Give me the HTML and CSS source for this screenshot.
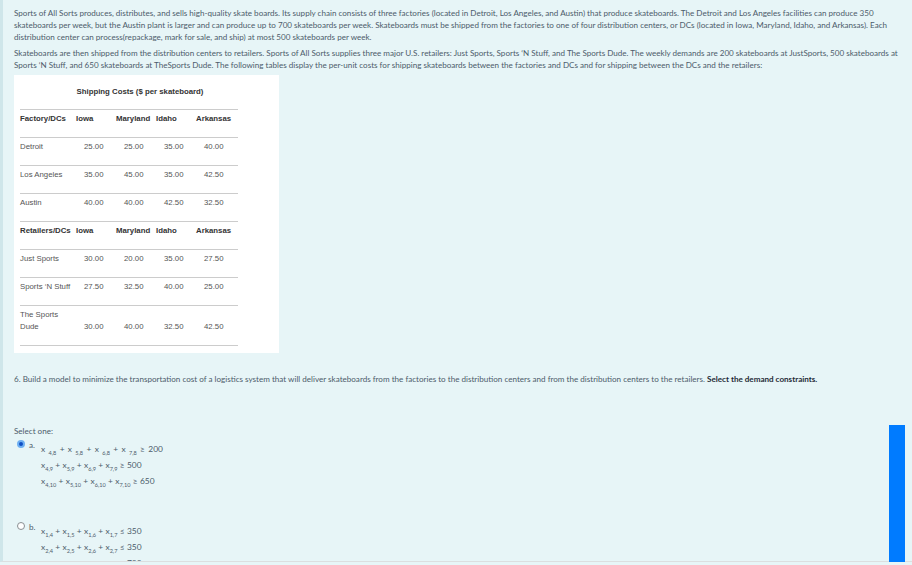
FILE: index.html
```html
<!DOCTYPE html>
<html lang="en">
<head>
    <meta charset="UTF-8">
    <meta name="viewport" content="width=device-width, initial-scale=1.0">
    <title>Question 6</title>
    <link rel="stylesheet" href="styles.css">
</head>
<body>

<div class="question">
    <p class="para">Sports of All Sorts produces, distributes, and sells high-quality skate boards. Its supply chain consists of three factories (located in Detroit, Los Angeles, and Austin) that produce skateboards. The Detroit and Los Angeles facilities can produce 350 skateboards per week, but the Austin plant is larger and can produce up to 700 skateboards per week. Skateboards must be shipped from the factories to one of four distribution centers, or DCs (located in Iowa, Maryland, Idaho, and Arkansas). Each distribution center can process(repackage, mark for sale, and ship) at most 500 skateboards per week.</p>
    <p class="para">Skateboards are then shipped from the distribution centers to retailers. Sports of All Sorts supplies three major U.S. retailers: Just Sports, Sports ‘N Stuff, and The Sports Dude. The weekly demands are 200 skateboards at JustSports, 500 skateboards at Sports ‘N Stuff, and 650 skateboards at TheSports Dude. The following tables display the per-unit costs for shipping skateboards between the factories and DCs and for shipping between the DCs and the retailers:</p>

    <!-- Shipping cost tables -->
    <div class="cost-box">
        <h4 class="cost-title">Shipping Costs ($ per skateboard)</h4>
        <table class="cost-table">
            <tr class="head"><td>Factory/DCs</td><td>Iowa</td><td>Maryland</td><td>Idaho</td><td>Arkansas</td></tr>
            <tr><td>Detroit</td><td class="num">25.00</td><td class="num">25.00</td><td class="num">35.00</td><td class="num">40.00</td></tr>
            <tr><td>Los Angeles</td><td class="num">35.00</td><td class="num">45.00</td><td class="num">35.00</td><td class="num">42.50</td></tr>
            <tr><td>Austin</td><td class="num">40.00</td><td class="num">40.00</td><td class="num">42.50</td><td class="num">32.50</td></tr>
            <tr class="head"><td>Retailers/DCs</td><td>Iowa</td><td>Maryland</td><td>Idaho</td><td>Arkansas</td></tr>
            <tr><td>Just Sports</td><td class="num">30.00</td><td class="num">20.00</td><td class="num">35.00</td><td class="num">27.50</td></tr>
            <tr><td>Sports ‘N Stuff</td><td class="num">27.50</td><td class="num">32.50</td><td class="num">40.00</td><td class="num">25.00</td></tr>
            <tr class="tall"><td>The Sports<br>Dude</td><td class="num">30.00</td><td class="num">40.00</td><td class="num">32.50</td><td class="num">42.50</td></tr>
        </table>
    </div>

    <p class="para prompt">6. Build a model to minimize the transportation cost of a logistics system that will deliver skateboards from the factories to the distribution centers and from the distribution centers to the retailers. <strong>Select the demand constraints.</strong></p>

    <div class="select-label">Select one:</div>

    <div class="option">
        <span class="radio checked"></span>
        <span class="opt-letter">a.</span>
        <div class="formulas">
            <div class="formula wide">x <sub>4,8</sub> + x <sub>5,8</sub> + x <sub>6,8</sub> + x <sub>7,8</sub> ≥ 200</div>
            <div class="formula">x<sub>4,9</sub> + x<sub>5,9</sub> + x<sub>6,9</sub> + x<sub>7,9</sub> ≥ 500</div>
            <div class="formula">x<sub>4,10</sub> + x<sub>5,10</sub> + x<sub>6,10</sub> + x<sub>7,10</sub> ≥ 650</div>
        </div>
    </div>

    <div class="option second">
        <span class="radio"></span>
        <span class="opt-letter">b.</span>
        <div class="formulas">
            <div class="formula">x<sub>1,4</sub> + x<sub>1,5</sub> + x<sub>1,6</sub> + x<sub>1,7</sub> ≤ 350</div>
            <div class="formula">x<sub>2,4</sub> + x<sub>2,5</sub> + x<sub>2,6</sub> + x<sub>2,7</sub> ≤ 350</div>
            <div class="formula">x<sub>3,4</sub> + x<sub>3,5</sub> + x<sub>3,6</sub> + x<sub>3,7</sub> ≤ 700</div>
        </div>
    </div>
</div>

<div class="scroll-thumb"></div>

</body>
</html>
```

FILE: styles.css
```css
html, body {
    margin: 0;
    height: 565px;
    overflow: hidden;
    background-color: #e7f5f7;
}

body {
    font-family: Lato, "Open Sans", sans-serif;
    font-size: 8.08px;
    color: #4d5c6b;
}

.question {
    height: 562px;
    box-sizing: border-box;
    overflow: hidden;
    border-left: 3px solid #cfe6ea;
    border-bottom: 1px solid #dcdfe0;
    padding: 7px 0 0 11px;
}

.para {
    margin: 0 0 4px;
    width: 884px;
    line-height: 12px;
}

.cost-box {
    width: 265px;
    height: 278px;
    box-sizing: border-box;
    margin-top: 4px;
    padding: 0 6px;
    background-color: #fff;
    font-family: "Liberation Sans", Arial, sans-serif;
    font-size: 7.8px;
    color: #555;
}

.cost-title {
    margin: 0;
    width: 240px;
    padding: 11px 0 12px;
    font-size: 7.8px;
    line-height: 11px;
    text-align: center;
    color: #333;
}

.cost-table {
    border-collapse: collapse;
    table-layout: fixed;
    width: 218px;
    border-bottom: 1px solid #ccc;
}

.cost-table tr {
    height: 28px;
}

.cost-table tr.tall {
    height: 40px;
}

.cost-table td {
    padding: 0 0 12px;
    border-top: 1px solid #ccc;
    line-height: 12px;
    white-space: nowrap;
    vertical-align: bottom;
}

.cost-table td:first-child {
    width: 56px;
}

.cost-table td:nth-child(2),
.cost-table td:nth-child(3),
.cost-table td:nth-child(4) {
    width: 40px;
}

.cost-table .head td {
    font-weight: bold;
    color: #333;
}

.cost-table .num {
    padding-left: 8px;
}

.prompt {
    margin: 20px 0 0;
}

.prompt strong {
    color: #1f2b36;
}

.select-label {
    margin-top: 40px;
    line-height: 12px;
}

.option {
    display: flex;
    align-items: flex-start;
    margin-top: 3px;
    padding-left: 3px;
}

.option.second {
    margin-top: 31px;
}

.radio {
    width: 8px;
    height: 8px;
    box-sizing: border-box;
    margin-top: 0;
    border: 1px solid #8a8f93;
    border-radius: 50%;
    background-color: #fff;
}

.radio.checked {
    border: 2px solid #6fb0f2;
    background-color: #0f4fc4;
}

.opt-letter {
    width: 12px;
    margin-left: 4px;
    line-height: 11px;
}

.formulas {
    padding-top: 3px;
    font-size: 8.4px;
}

.formula {
    height: 16px;
    line-height: 12px;
    white-space: nowrap;
    word-spacing: 0.2px;
}

.formula.wide {
    word-spacing: 1.2px;
}

.formula sub {
    font-size: 5.6px;
    line-height: 0;
}

.scroll-thumb {
    position: absolute;
    top: 425px;
    left: 889px;
    width: 16px;
    height: 137px;
    background-color: #007bff;
}
```
